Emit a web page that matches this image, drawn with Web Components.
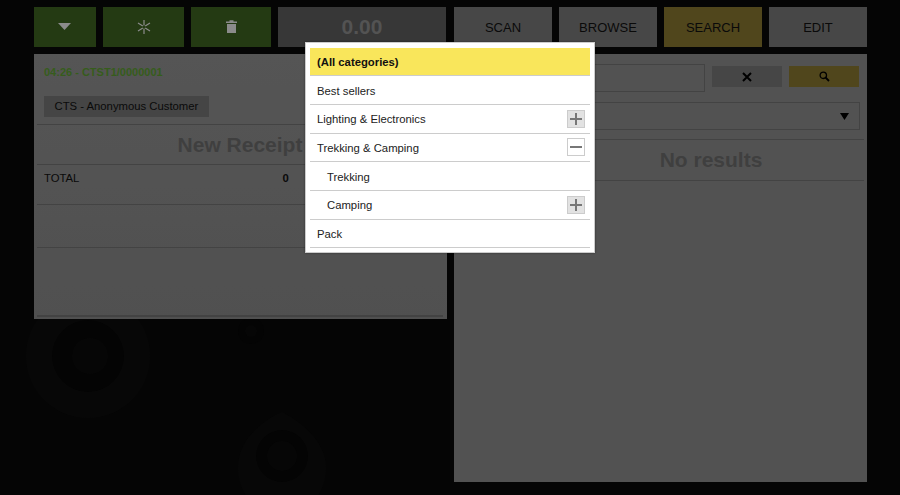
<!DOCTYPE html>
<html>
<head>
<meta charset="utf-8">
<title>POS</title>
<style>
  html, body { margin: 0; height: 100%; overflow: hidden; background: #090909; }
  body { font-family: "Liberation Sans", Arial, sans-serif; }
</style>
</head>
<body>
<pos-app>
  <pos-button slot="left" kind="green" style="--w:62px"><svg width="14" height="8" viewBox="0 0 14 8"><path d="M0 0h13L6.5 7z" fill="#e8e8e8"/></svg></pos-button>
  <pos-button slot="left" kind="green" style="--w:81px"><svg width="14" height="14" viewBox="0 0 14 14"><path d="M7 0v5.600M7 8.400V14M1 3l4.800 3M8.200 8 13 11M13 3 8.200 6M5.800 8 1 11" stroke="#e8e8e8" stroke-width="1.200" fill="none"/></svg></pos-button>
  <pos-button slot="left" kind="green" style="--w:80px"><svg style="margin-top:-2px" width="11" height="13" viewBox="0 0 11 13"><path d="M0 1.500h3.500V.3h4v1.200H11v1.500H0zM1 4h9v9H1z" fill="#e8e8e8"/></svg></pos-button>
  <pos-button slot="left" kind="total" style="--w:168px">0.00</pos-button>
  <pos-button slot="right" style="--w:98px">SCAN</pos-button>
  <pos-button slot="right" style="--w:98px">BROWSE</pos-button>
  <pos-button slot="right" kind="yellow" style="--w:98px">SEARCH</pos-button>
  <pos-button slot="right" style="--w:98px">EDIT</pos-button>
  <receipt-panel slot="receipt"></receipt-panel>
  <search-panel slot="search"></search-panel>
</pos-app>
<category-dialog>
  <category-row selected>(All categories)</category-row>
  <category-row>Best sellers</category-row>
  <category-row toggle="plus">Lighting &amp; Electronics</category-row>
  <category-row toggle="minus">Trekking &amp; Camping</category-row>
  <category-row child>Trekking</category-row>
  <category-row child toggle="plus">Camping</category-row>
  <category-row>Pack</category-row>
</category-dialog>

<script>
class PosApp extends HTMLElement {
  constructor() {
    super();
    this.attachShadow({ mode: "open" });
    this.shadowRoot.innerHTML = `
    <style>
      :host { display: block; position: relative; width: 900px; height: 495px; box-sizing: border-box; padding: 7px 33px 13px 34px; overflow: hidden; }
      .bg { position: absolute; left: 0; top: 0; }
      .grid { position: relative; display: grid; grid-template-columns: 413px 413px; column-gap: 7px; grid-template-rows: 40px auto; row-gap: 7px; height: 100%; }
      .bar { display: flex; gap: 7px; }
      .top { display: flex; align-items: flex-start; }
      .scrim { position: absolute; inset: 0; background: rgba(0,0,0,.4); }
    </style>
    <svg class="bg" width="900" height="495" viewBox="0 0 900 495">
      <g fill="#0d0d0d">
        <circle cx="88" cy="356" r="62"/>
        <path d="M282 412c26 14 44 34 44 56 0 27-20 47-44 47s-44-20-44-47c0-24 18-44 44-56z"/>
      </g>
      <g fill="#070707">
        <circle cx="88" cy="356" r="36"/>
        <circle cx="282" cy="456" r="26"/>
        <circle cx="251" cy="331" r="13"/>
      </g>
      <g fill="#0b0b0b">
        <circle cx="90" cy="356" r="18"/>
        <circle cx="282" cy="456" r="15"/>
        <circle cx="251" cy="331" r="6"/>
      </g>
    </svg>
    <div class="grid">
      <div class="bar"><slot name="left"></slot></div>
      <div class="bar"><slot name="right"></slot></div>
      <div class="top"><slot name="receipt"></slot></div>
      <div class="top"><slot name="search"></slot></div>
    </div>
    <div class="scrim"></div>`;
  }
}

class PosButton extends HTMLElement {
  constructor() {
    super();
    this.attachShadow({ mode: "open" });
    this.shadowRoot.innerHTML = `
    <style>
      :host { display: flex; align-items: center; justify-content: center; width: var(--w, 98px); height: 40px; background: #777; color: #111; font-size: 13px; }
      :host([kind="green"]) { background: #3c6121; }
      :host([kind="yellow"]) { background: #857530; }
      :host([kind="total"]) { background: #5c5c5c; color: #8a8a8a; font-size: 21px; font-weight: bold; }
    </style>
    <slot></slot>`;
  }
}

class ReceiptPanel extends HTMLElement {
  constructor() {
    super();
    this.attachShadow({ mode: "open" });
    this.shadowRoot.innerHTML = `
    <style>
      :host { display: block; width: 413px; height: 265px; box-sizing: border-box; padding: 0 4px 0 3px; background: linear-gradient(#8e8e8e, #868686); color: #111; font-size: 11.300px; }
      .head { height: 71px; border-bottom: 1px solid #707070; box-sizing: border-box; padding: 12px 7px 0; }
      .time { color: #5a9a30; font-weight: bold; font-size: 11px; line-height: 13px; }
      .chip { display: inline-block; margin-top: 17px; background: #737373; height: 21px; line-height: 21px; padding: 0 10.500px; }
      h2 { margin: 0; height: 40px; line-height: 40px; border-bottom: 1px solid #707070; box-sizing: border-box; text-align: center; font-size: 21px; color: #6a6a6a; }
      .total { height: 40px; box-sizing: border-box; border-bottom: 1px solid #707070; padding: 7px 7px 0; display: flex; line-height: 13px; }
      .total span { width: 238.500px; }
      .blank { height: 43px; box-sizing: border-box; border-bottom: 1px solid #707070; }
      .fill { height: 69px; box-sizing: border-box; border-bottom: 2px solid #707070; }
    </style>
    <div class="head">
      <div class="time">04:26 - CTST1/0000001</div>
      <div class="chip">CTS - Anonymous Customer</div>
    </div>
    <h2>New Receipt</h2>
    <div class="total"><span>TOTAL</span><b>0</b></div>
    <div class="blank"></div>
    <div class="fill"></div>`;
  }
}

class SearchPanel extends HTMLElement {
  constructor() {
    super();
    this.attachShadow({ mode: "open" });
    this.shadowRoot.innerHTML = `
    <style>
      :host { display: block; width: 413px; height: 428px; box-sizing: border-box; background: #898989; color: #111; }
      .row { display: flex; align-items: flex-start; gap: 7px; padding: 10px 8px 0 7px; }
      .input { flex: 1; height: 28px; box-sizing: border-box; border: 1px solid #707070; }
      .btn { width: 70px; height: 21px; margin-top: 2px; background: #757575; display: flex; align-items: center; justify-content: center; }
      .btn.go { background: #857530; }
      .select { margin: 10px 7px 0; height: 28px; box-sizing: border-box; border: 1px solid #707070; display: flex; align-items: center; justify-content: flex-end; padding-right: 10px; }
      .rule { margin-top: 9px; height: 42px; box-sizing: border-box; border-top: 1px solid #707070; border-bottom: 1px solid #707070; margin-right: 3px; padding-left: 104px; text-align: center; font-size: 21px; font-weight: bold; line-height: 40px; color: #6a6a6a; }
    </style>
    <div class="row">
      <div class="input"></div>
      <div class="btn"><svg width="10" height="10" viewBox="0 0 10 10"><path d="M1 1l8 8M9 1 1 9" stroke="#000" stroke-width="2" fill="none"/></svg></div>
      <div class="btn go"><svg width="11" height="11" viewBox="0 0 11 11"><circle cx="4.300" cy="4.300" r="3.200" stroke="#000" stroke-width="1.300" fill="none"/><path d="M6.700 6.700 10 10" stroke="#000" stroke-width="1.800"/></svg></div>
    </div>
    <div class="select"><svg width="9" height="7" viewBox="0 0 9 7"><path d="M0 0h9L4.500 7z" fill="#000"/></svg></div>
    <div class="rule">No results</div>`;
  }
}

class CategoryDialog extends HTMLElement {
  constructor() {
    super();
    this.attachShadow({ mode: "open" });
    this.shadowRoot.innerHTML = `
    <style>
      :host { display: block; position: absolute; left: 305px; top: 42px; width: 290px; box-sizing: border-box; background: #fff; border: 1px solid #ccc; padding: 4.700px 4px 3.700px; font-size: 11.300px; color: #222; box-shadow: 0 0 2px #0006; }
    </style>
    <slot></slot>`;
  }
}

class CategoryRow extends HTMLElement {
  constructor() {
    super();
    this.attachShadow({ mode: "open" });
    const toggle = this.getAttribute("toggle");
    const sign = toggle === "plus"
      ? `<svg width="12" height="12" viewBox="0 0 12 12"><path d="M6 0v12M0 6h12" stroke="#777" stroke-width="2"/></svg>`
      : `<svg width="12" height="12" viewBox="0 0 12 12"><path d="M0 6h12" stroke="#777" stroke-width="2"/></svg>`;
    this.shadowRoot.innerHTML = `
    <style>
      :host { display: flex; align-items: center; justify-content: space-between; height: 28.670px; box-sizing: border-box; border-bottom: 1px solid #ccc; padding: 0 5px 0 7px; }
      :host([selected]) { background: #f9e65b; font-weight: bold; color: #111; }
      :host([child]) { padding-left: 17px; }
      span { padding-top: 1px; }
      .toggle { width: 18px; height: 18px; box-sizing: border-box; border: 1px solid #ccc; display: flex; align-items: center; justify-content: center; }
      .toggle.plus { background: #e2e2e2; }
    </style>
    <span><slot></slot></span>
    ${toggle ? `<div class="toggle ${toggle}">${sign}</div>` : ""}`;
  }
}

customElements.define("pos-app", PosApp);
customElements.define("pos-button", PosButton);
customElements.define("receipt-panel", ReceiptPanel);
customElements.define("search-panel", SearchPanel);
customElements.define("category-dialog", CategoryDialog);
customElements.define("category-row", CategoryRow);
</script>
</body>
</html>
